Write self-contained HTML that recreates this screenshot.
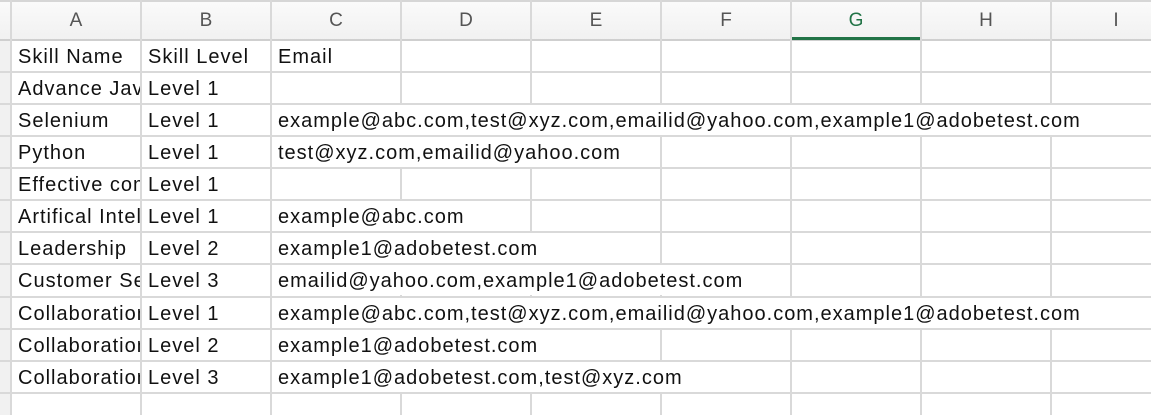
<!DOCTYPE html><html><head><style>
body{margin:0;width:1151px;height:415px;background:#fff;position:relative;overflow:hidden;font-family:"Liberation Sans",sans-serif;}
.hd{position:absolute;top:0;height:40px;background:linear-gradient(#fafafa,#f1f1f1);border-top:2px solid #d6d6d6;box-sizing:border-box;}
.hl{position:absolute;top:2px;height:38px;line-height:38px;text-align:center;font-size:19px;color:#555;}
.v{position:absolute;top:0;bottom:0;width:2px;background:#d9d9d9;}
.h{position:absolute;left:0;right:0;height:2px;background:#d9d9d9;}
.c{position:absolute;height:30px;line-height:32px;font-size:20px;letter-spacing:1px;color:#111;white-space:nowrap;overflow:hidden;padding-left:6px;box-sizing:border-box;background:#fff;}
</style></head><body>
<div class="hd" style="left:0;width:1151px"></div>
<div style="position:absolute;left:0;top:40px;width:10px;bottom:0;background:#f1f1f1"></div>
<div class="h" style="top:39px;background:#cfcfcf"></div>
<div style="position:absolute;left:790px;top:37px;width:131px;height:3px;background:#217346"></div>
<div class="hl" style="left:11px;width:130px">A</div>
<div class="hl" style="left:141px;width:130px">B</div>
<div class="hl" style="left:271px;width:130px">C</div>
<div class="hl" style="left:401px;width:130px">D</div>
<div class="hl" style="left:531px;width:130px">E</div>
<div class="hl" style="left:661px;width:130px">F</div>
<div class="hl" style="left:791px;width:130px;color:#217346">G</div>
<div class="hl" style="left:921px;width:130px">H</div>
<div class="hl" style="left:1051px;width:130px">I</div>
<div class="v" style="left:10px"></div>
<div class="v" style="left:140px"></div>
<div class="v" style="left:270px"></div>
<div class="v" style="left:400px"></div>
<div class="v" style="left:530px"></div>
<div class="v" style="left:660px"></div>
<div class="v" style="left:790px"></div>
<div class="v" style="left:920px"></div>
<div class="v" style="left:1050px"></div>
<div class="h" style="top:71px"></div><div class="h" style="top:103px"></div><div class="h" style="top:135px"></div><div class="h" style="top:167px"></div><div class="h" style="top:199px"></div><div class="h" style="top:231px"></div><div class="h" style="top:263px"></div><div class="h" style="top:296px"></div><div class="h" style="top:328px"></div><div class="h" style="top:360px"></div><div class="h" style="top:392px"></div>
<div class="c" style="left:12px;top:41px;width:128px">Skill Name</div><div class="c" style="left:142px;top:41px;width:128px">Skill Level</div><div class="c" style="left:272px;top:41px;width:128px">Email</div>
<div class="c" style="left:12px;top:73px;width:128px">Advance Java</div><div class="c" style="left:142px;top:73px;width:128px">Level 1</div>
<div class="c" style="left:12px;top:105px;width:128px">Selenium</div><div class="c" style="left:142px;top:105px;width:128px">Level 1</div><div class="c" style="left:272px;top:105px;width:879px">example@abc.com,test@xyz.com,emailid@yahoo.com,example1@adobetest.com</div>
<div class="c" style="left:12px;top:137px;width:128px">Python</div><div class="c" style="left:142px;top:137px;width:128px">Level 1</div><div class="c" style="left:272px;top:137px;width:388px">test@xyz.com,emailid@yahoo.com</div>
<div class="c" style="left:12px;top:169px;width:128px">Effective communication</div><div class="c" style="left:142px;top:169px;width:128px">Level 1</div>
<div class="c" style="left:12px;top:201px;width:128px">Artifical Intelligence</div><div class="c" style="left:142px;top:201px;width:128px">Level 1</div><div class="c" style="left:272px;top:201px;width:258px">example@abc.com</div>
<div class="c" style="left:12px;top:233px;width:128px">Leadership</div><div class="c" style="left:142px;top:233px;width:128px">Level 2</div><div class="c" style="left:272px;top:233px;width:388px">example1@adobetest.com</div>
<div class="c" style="left:12px;top:265px;width:128px">Customer Service</div><div class="c" style="left:142px;top:265px;width:128px">Level 3</div><div class="c" style="left:272px;top:265px;width:518px">emailid@yahoo.com,example1@adobetest.com</div>
<div class="c" style="left:12px;top:298px;width:128px">Collaboration</div><div class="c" style="left:142px;top:298px;width:128px">Level 1</div><div class="c" style="left:272px;top:298px;width:879px">example@abc.com,test@xyz.com,emailid@yahoo.com,example1@adobetest.com</div>
<div class="c" style="left:12px;top:330px;width:128px">Collaboration</div><div class="c" style="left:142px;top:330px;width:128px">Level 2</div><div class="c" style="left:272px;top:330px;width:388px">example1@adobetest.com</div>
<div class="c" style="left:12px;top:362px;width:128px">Collaboration</div><div class="c" style="left:142px;top:362px;width:128px">Level 3</div><div class="c" style="left:272px;top:362px;width:518px">example1@adobetest.com,test@xyz.com</div>
</body></html>
